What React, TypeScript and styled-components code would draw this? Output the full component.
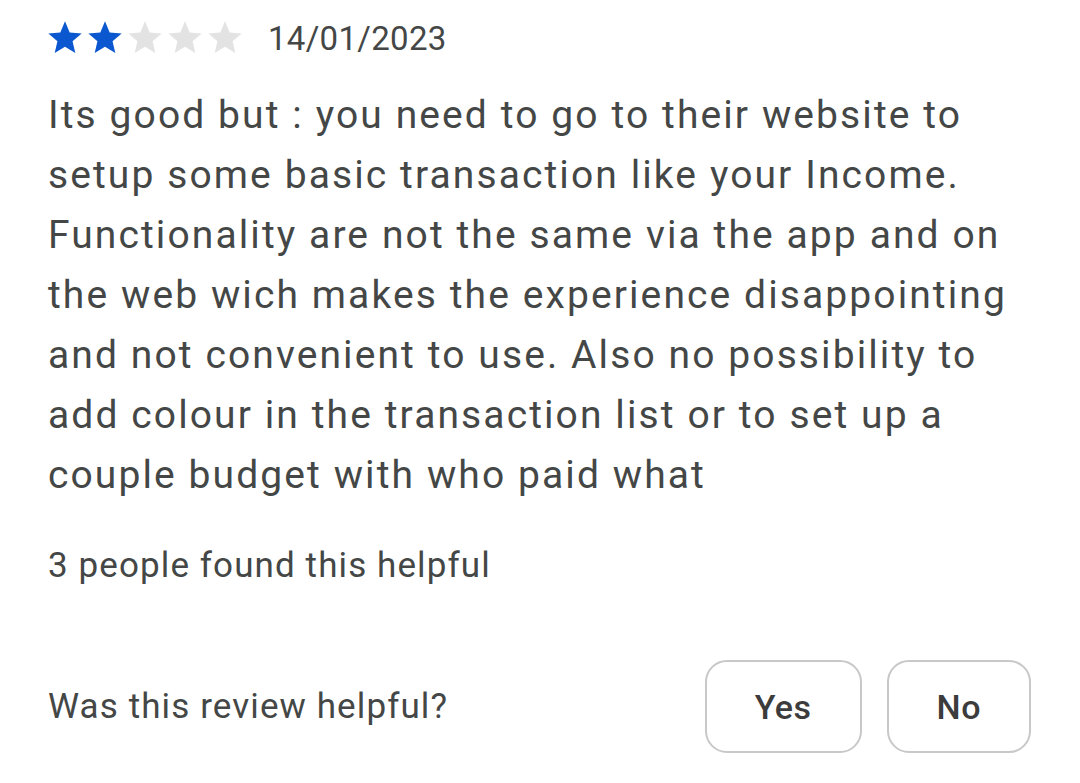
import React from "react";
import styled, { createGlobalStyle } from "styled-components";

const GlobalStyle = createGlobalStyle`
  html, body {
    margin: 0;
    padding: 0;
    background: #fff;
  }
  body {
    font-family: Roboto, "Noto Sans", "Liberation Sans", sans-serif;
    color: #444746;
  }
`;

const Review = styled.div`
  width: 1080px;
  height: 783px;
  box-sizing: border-box;
  padding: 17px 49px 0 48px;
  display: flex;
  flex-direction: column;
`;

const Header = styled.div`
  display: flex;
  align-items: center;
  height: 42px;
`;

const Stars = styled.div`
  display: flex;
  margin-left: -3px;
  margin-right: 23px;
`;

const ReviewDate = styled.span`
  font-size: 33px;
  letter-spacing: 0.3px;
  color: #444746;
`;

const Body = styled.p`
  margin: 26px 0 0;
  font-size: 39px;
  line-height: 60px;
  letter-spacing: 2.1px;
  color: #444746;
`;

const HelpfulCount = styled.div`
  margin-top: 40px;
  font-size: 35px;
  letter-spacing: 1.1px;
  color: #444746;
`;

const Footer = styled.div`
  margin-top: 74px;
  display: flex;
  align-items: center;
  justify-content: space-between;
`;

const Question = styled.span`
  font-size: 35px;
  letter-spacing: 1.1px;
  color: #444746;
`;

const Buttons = styled.div`
  display: flex;
  gap: 25px;
`;

const VoteButton = styled.button`
  height: 93px;
  padding: 0 48px;
  border: 2px solid #c8c8c8;
  border-radius: 22px;
  background: #fff;
  font-family: Roboto, "Noto Sans", "Liberation Sans", sans-serif;
  font-size: 34px;
  font-weight: 500;
  letter-spacing: 0.5px;
  color: #3c3c3c;
`;

const Star: React.FC<{ filled: boolean }> = ({ filled }) => (
  <svg width="40" height="40" viewBox="0 0 24 24">
    <path
      d="M12 17.27L18.18 21l-1.64-7.03L22 9.24l-7.19-.61L12 2 9.19 8.63 2 9.24l5.46 4.73L5.82 21z"
      fill={filled ? "#0b57d0" : "#e3e3e3"}
    />
  </svg>
);

export default function App() {
  const rating = 2;
  return (
    <>
      <GlobalStyle />
      <Review>
        <Header>
          <Stars>
            {[1, 2, 3, 4, 5].map((i) => (
              <Star key={i} filled={i <= rating} />
            ))}
          </Stars>
          <ReviewDate>14/01/2023</ReviewDate>
        </Header>
        <Body>
          Its good but : you need to go to their website to
          <br />
          setup some basic transaction like your Income.
          <br />
          Functionality are not the same via the app and on
          <br />
          the web wich makes the experience disappointing
          <br />
          and not convenient to use. Also no possibility to
          <br />
          add colour in the transaction list or to set up a
          <br />
          couple budget with who paid what
        </Body>
        <HelpfulCount>3 people found this helpful</HelpfulCount>
        <Footer>
          <Question>Was this review helpful?</Question>
          <Buttons>
            <VoteButton>Yes</VoteButton>
            <VoteButton>No</VoteButton>
          </Buttons>
        </Footer>
      </Review>
    </>
  );
}
